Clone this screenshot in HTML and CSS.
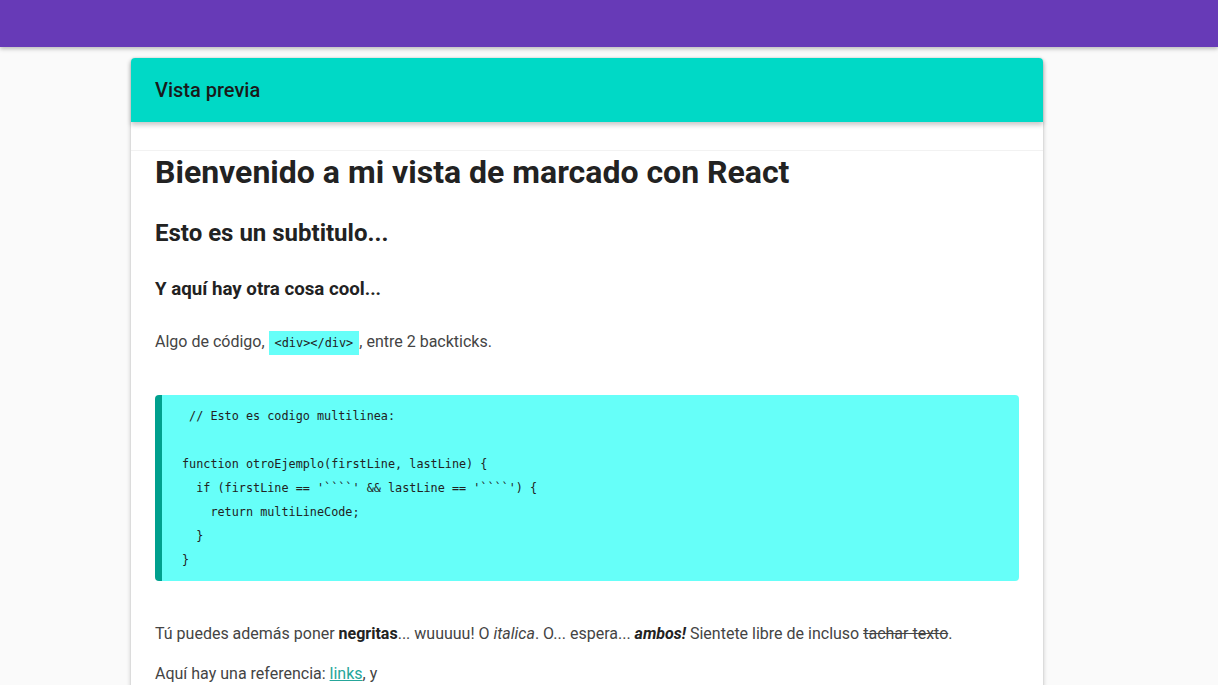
FILE: index.html
```html
<!DOCTYPE html>
<html lang="es">
<head>
<meta charset="utf-8">
<title>Vista previa</title>
<link rel="stylesheet" href="styles.css">
</head>
<body>
<header class="appbar"></header>
<main class="layout">
  <section class="card">
    <div class="card-header">Vista previa</div>
    <div class="card-spacer"></div>
    <div class="preview">
      <h1>Bienvenido a mi vista de marcado con React</h1>
      <h2>Esto es un subtitulo...</h2>
      <h3>Y aquí hay otra cosa cool...</h3>
      <p class="p-code">Algo de código, <code>&lt;div&gt;&lt;/div&gt;</code>, entre 2 backticks.</p>
      <pre><code> // Esto es codigo multilinea:

function otroEjemplo(firstLine, lastLine) {
  if (firstLine == '````' &amp;&amp; lastLine == '````') {
    return multiLineCode;
  }
}</code></pre>
      <p class="p-after">Tú puedes además poner <strong>negritas</strong>... wuuuuu! O <em>italica</em>. O... espera... <strong><em>ambos!</em></strong> Sientete libre de incluso <del>tachar texto</del>.</p>
      <p class="p-link">Aquí hay una referencia: <a href="#">links</a>, y</p>
    </div>
  </section>
</main>
</body>
</html>
```

FILE: styles.css
```css
html, body {
  margin: 0;
  padding: 0;
  background: #fafafa;
  font-family: Roboto, "Liberation Sans", Arial, sans-serif;
  overflow: hidden;
  height: 685px;
}

.appbar {
  height: 47px;
  background: #673ab7;
  box-shadow: 0 2px 4px rgba(0, 0, 0, 0.25);
  position: relative;
  z-index: 2;
}

.layout {
  padding: 11px 0 0 131px;
}

.card {
  width: 912px;
  background: #ffffff;
  border-radius: 4px 4px 0 0;
  box-shadow: 0 2px 5px rgba(0, 0, 0, 0.22), 0 0 2px rgba(0, 0, 0, 0.12);
  height: 700px;
}

.card-header {
  height: 64px;
  background: #00d9c6;
  border-radius: 4px 4px 0 0;
  box-shadow: 0 3px 5px rgba(0, 0, 0, 0.22);
  display: flex;
  align-items: center;
  padding-left: 24px;
  font-size: 20px;
  font-weight: 500;
  color: #1a1a1a;
  position: relative;
  z-index: 1;
}

.card-spacer {
  height: 28px;
  border-bottom: 1px solid #f2f2f2;
}

.preview {
  padding: 0 24px;
  color: #444;
}

.preview h1 {
  margin: 2px 0 0;
  font-size: 32px;
  line-height: 38px;
  font-weight: 700;
  color: #222;
}

.preview h2 {
  margin: 28px 0 0;
  font-size: 24px;
  line-height: 29px;
  font-weight: 700;
  color: #222;
}

.preview h3 {
  margin: 30px 0 0;
  font-size: 18.7px;
  line-height: 22px;
  font-weight: 700;
  color: #222;
}

.preview p {
  font-size: 16px;
  line-height: 24px;
  margin: 0;
}

.p-code {
  margin-top: 30px !important;
}

.preview p code {
  font-family: "DejaVu Sans Mono", "Liberation Mono", monospace;
  font-size: 11.9px;
  background: #66fff9;
  color: #222;
  padding: 5px 6px;
}

.preview pre {
  margin: 40px 0 0;
  background: #66fff9;
  border-left: 7px solid #00a08e;
  border-radius: 4px;
  padding: 9px 20px;
  font-family: "DejaVu Sans Mono", "Liberation Mono", monospace;
  font-size: 11.8px;
  line-height: 24px;
  color: #222;
}

.preview pre code {
  font-family: inherit;
}

.p-after {
  margin-top: 41px !important;
}

.p-link {
  margin-top: 16px !important;
}

.preview strong {
  color: #222;
}

.preview a {
  color: #26a69a;
  text-decoration: underline;
}
```
